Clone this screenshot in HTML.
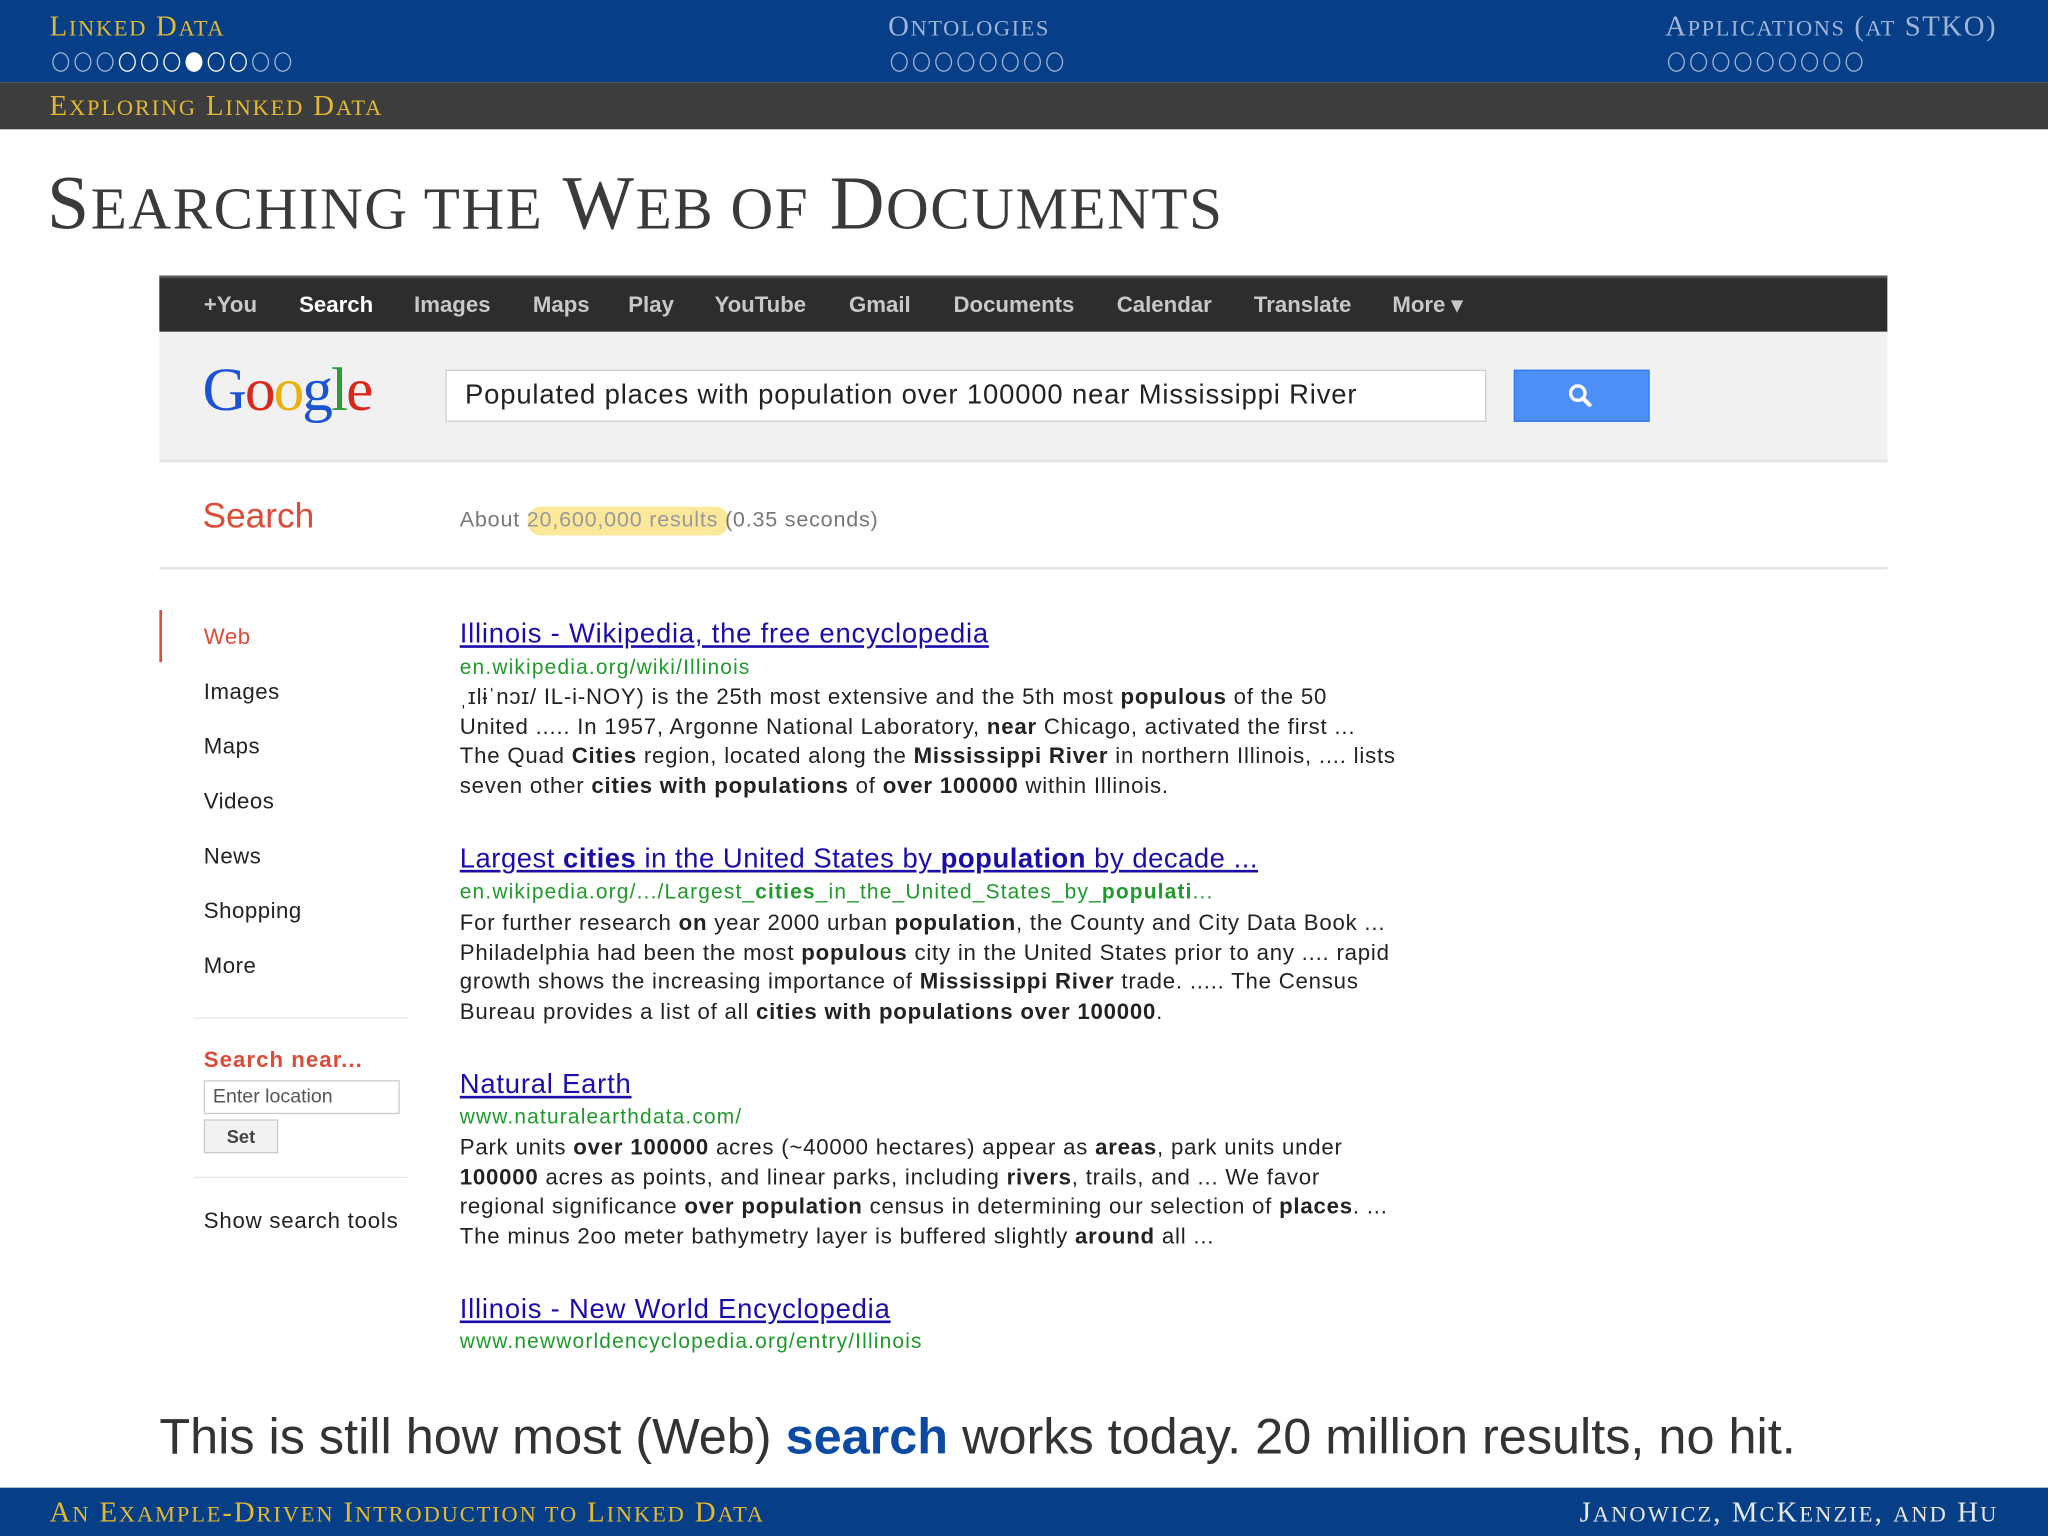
<!DOCTYPE html>
<html><head><meta charset="utf-8"><style>
*{margin:0;padding:0;box-sizing:border-box}
html,body{width:2048px;height:1536px;overflow:hidden;background:#fff}
#s{position:absolute;left:0;top:0;width:1568px;height:1176px;transform:scale(1.306122);transform-origin:0 0;font-family:"Liberation Sans",Arial,sans-serif}
.a{position:absolute;white-space:nowrap}
.serif{font-family:"Liberation Serif",serif}
.serif s{text-decoration:none;font-size:0.78em;text-transform:uppercase}
.dots{position:absolute;display:flex;gap:4px}
.dots i{display:block;width:13px;height:15px;border:1.3px solid #9fb4d6;border-radius:50%}
.dots i.f{background:#fff;border-color:#fff}
.dots i.w{border-color:#fff}
.nav span{position:absolute;top:224px;font-weight:bold;font-size:17px;color:#c8c8c8}
.ln{position:absolute;left:156px;font-size:17px;color:#222;letter-spacing:0.4px}
.t{position:absolute;left:352px;font-size:21px;color:#1a0dab;text-decoration:underline;white-space:nowrap;letter-spacing:0.6px}
.u{position:absolute;left:352px;font-size:16px;color:#1e9a2a;white-space:nowrap;letter-spacing:0.9px}
.p{position:absolute;left:352px;font-size:17px;color:#222;line-height:22.6px;white-space:nowrap;letter-spacing:0.6px}
</style></head><body><div id="s">
<div class="a" style="left:0;top:0;width:1568px;height:63px;background:#063f88"></div>
<div class="a" style="left:0;top:63px;width:1568px;height:36px;background:#3d3d3d"></div>
<div class="a serif" style="left:38px;top:7px;font-size:22px;color:#e3b931;letter-spacing:1.3px">L<s>inked</s> D<s>ata</s></div>
<div class="a serif" style="left:680px;top:7px;font-size:22px;color:#9fb4d6;letter-spacing:1.2px">O<s>ntologies</s></div>
<div class="a serif" style="left:1275px;top:7px;font-size:22px;color:#9fb4d6;letter-spacing:1.2px">A<s>pplications</s> (<s>at</s> STKO)</div>
<div class="dots" style="left:40px;top:40px"><i></i><i></i><i></i><i class="w"></i><i class="w"></i><i class="w"></i><i class="f"></i><i class="w"></i><i class="w"></i><i></i><i></i></div>
<div class="dots" style="left:682px;top:40px"><i></i><i></i><i></i><i></i><i></i><i></i><i></i><i></i></div>
<div class="dots" style="left:1277px;top:40px"><i></i><i></i><i></i><i></i><i></i><i></i><i></i><i></i><i></i></div>
<div class="a serif" style="left:38px;top:68px;font-size:22px;color:#e3b931;letter-spacing:1.4px">E<s>xploring</s> L<s>inked</s> D<s>ata</s></div>
<div class="a serif" style="left:36px;top:122px;font-size:58px;color:#3a3a3a;letter-spacing:1.2px">S<s>earching the</s> W<s>eb of</s> D<s>ocuments</s></div>

<div class="a" style="left:122px;top:211px;width:1323px;height:43px;background:#2d2d2d;border-top:2px solid #555"></div>
<div class="nav"><span style="left:156px">+You</span><span style="left:229px;color:#fff">Search</span><span style="left:317px">Images</span><span style="left:408px">Maps</span><span style="left:481px">Play</span><span style="left:547px">YouTube</span><span style="left:650px">Gmail</span><span style="left:730px">Documents</span><span style="left:855px">Calendar</span><span style="left:960px">Translate</span><span style="left:1066px">More ▾</span></div>
<div class="a" style="left:122px;top:254px;width:1323px;height:100px;background:#f1f1f1;border-bottom:2px solid #e3e3e3"></div>
<div class="a" style="left:155px;top:272px;font-family:'Liberation Serif',serif;font-size:47px;letter-spacing:-1.5px"><span style="color:#1c52d4">G</span><span style="color:#d8271b">o</span><span style="color:#eab00d">o</span><span style="color:#1c52d4">g</span><span style="color:#2c9b36">l</span><span style="color:#d8271b">e</span></div>
<div class="a" style="left:341px;top:283px;width:797px;height:40px;background:#fff;border:1px solid #ccc"></div>
<div class="a" style="left:356px;top:291px;font-size:21px;color:#222;letter-spacing:0.65px">Populated places with population over 100000 near Mississippi River</div>
<div class="a" style="left:1159px;top:283px;width:104px;height:40px;background:#4d8ef8;border:1px solid #3079ed"></div>
<svg class="a" style="left:1199px;top:292px" width="22" height="22" viewBox="0 0 22 22"><circle cx="9" cy="9" r="5.5" fill="none" stroke="#fff" stroke-width="2.6"/><path d="M13 13l5 5" stroke="#fff" stroke-width="3.2" stroke-linecap="round"/></svg>
<div class="a" style="left:155px;top:380px;font-size:27px;color:#dd4b39">Search</div>
<div class="a" style="left:404px;top:388px;width:154px;height:22px;background:#fae48a;border-radius:10px;opacity:.85"></div>
<div class="a" style="left:352px;top:389px;font-size:16.5px;color:#777;letter-spacing:0.6px">About <span style="color:#999">20,600,000 results</span> (0.35 seconds)</div>
<div class="a" style="left:122px;top:434px;width:1323px;height:2px;background:#e5e5e5"></div>

<div class="a" style="left:122px;top:467px;width:2px;height:40px;background:#dd4b39"></div>
<div class="ln" style="top:478px;color:#dd4b39">Web</div>
<div class="ln" style="top:520px">Images</div>
<div class="ln" style="top:562px">Maps</div>
<div class="ln" style="top:604px">Videos</div>
<div class="ln" style="top:646px">News</div>
<div class="ln" style="top:688px">Shopping</div>
<div class="ln" style="top:730px">More</div>
<div class="a" style="left:148px;top:779px;width:164px;height:1px;background:#e5e5e5"></div>
<div class="ln" style="top:802px;color:#dd4b39;font-weight:bold;letter-spacing:0.8px">Search near...</div>
<div class="a" style="left:156px;top:827px;width:150px;height:26px;border:1px solid #ccc;font-size:15px;color:#555;padding:3px 0 0 6px">Enter location</div>
<div class="a" style="left:156px;top:857px;width:57px;height:26px;border:1px solid #ccc;background:#f2f2f2;font-size:14px;font-weight:bold;color:#444;text-align:center;padding-top:4px">Set</div>
<div class="a" style="left:148px;top:901px;width:164px;height:1px;background:#e5e5e5"></div>
<div class="ln" style="top:925px;letter-spacing:0.6px">Show search tools</div>

<div class="t" style="top:474px">Illinois - Wikipedia, the free encyclopedia</div>
<div class="u" style="top:503px">en.wikipedia.org/wiki/Illinois</div>
<div class="p" style="top:523px">ˌɪlɨˈnɔɪ/ IL-i-NOY) is the 25th most extensive and the 5th most <b>populous</b> of the 50<br>United ..... In 1957, Argonne National Laboratory, <b>near</b> Chicago, activated the first ...<br>The Quad <b>Cities</b> region, located along the <b>Mississippi River</b> in northern Illinois, .... lists<br>seven other <b>cities with populations</b> of <b>over 100000</b> within Illinois.</div>

<div class="t" style="top:646px;letter-spacing:0.4px">Largest <b>cities</b> in the United States by <b>population</b> by decade ...</div>
<div class="u" style="top:675px">en.wikipedia.org/.../Largest_<b>cities</b>_in_the_United_States_by_<b>populati</b>...</div>
<div class="p" style="top:696px">For further research <b>on</b> year 2000 urban <b>population</b>, the County and City Data Book ...<br>Philadelphia had been the most <b>populous</b> city in the United States prior to any .... rapid<br>growth shows the increasing importance of <b>Mississippi River</b> trade. ..... The Census<br>Bureau provides a list of all <b>cities with populations over 100000</b>.</div>

<div class="t" style="top:819px">Natural Earth</div>
<div class="u" style="top:847px">www.naturalearthdata.com/</div>
<div class="p" style="top:868px">Park units <b>over 100000</b> acres (~40000 hectares) appear as <b>areas</b>, park units under<br><b>100000</b> acres as points, and linear parks, including <b>rivers</b>, trails, and ... We favor<br>regional significance <b>over population</b> census in determining our selection of <b>places</b>. ...<br>The minus 2oo meter bathymetry layer is buffered slightly <b>around</b> all ...</div>

<div class="t" style="top:991px">Illinois - New World Encyclopedia</div>
<div class="u" style="top:1019px">www.newworldencyclopedia.org/entry/Illinois</div>

<div class="a" style="left:122px;top:1079px;font-size:38.6px;color:#333">This is still how most (Web) <b style="color:#0b4aa2">search</b> works today. 20 million results, no hit.</div>
<div class="a" style="left:0;top:1139px;width:1568px;height:37px;background:#063f88"></div>
<div class="a serif" style="left:38px;top:1145px;font-size:22px;color:#e3b931;letter-spacing:1.45px">A<s>n</s> E<s>xample</s>-D<s>riven</s> I<s>ntroduction to</s> L<s>inked</s> D<s>ata</s></div>
<div class="a serif" style="right:38px;top:1145px;font-size:22px;color:#e8e8e8;letter-spacing:1.6px">J<s>anowicz</s>, M<s>c</s>K<s>enzie</s>, <s>and</s> H<s>u</s></div>
</div></body></html>
